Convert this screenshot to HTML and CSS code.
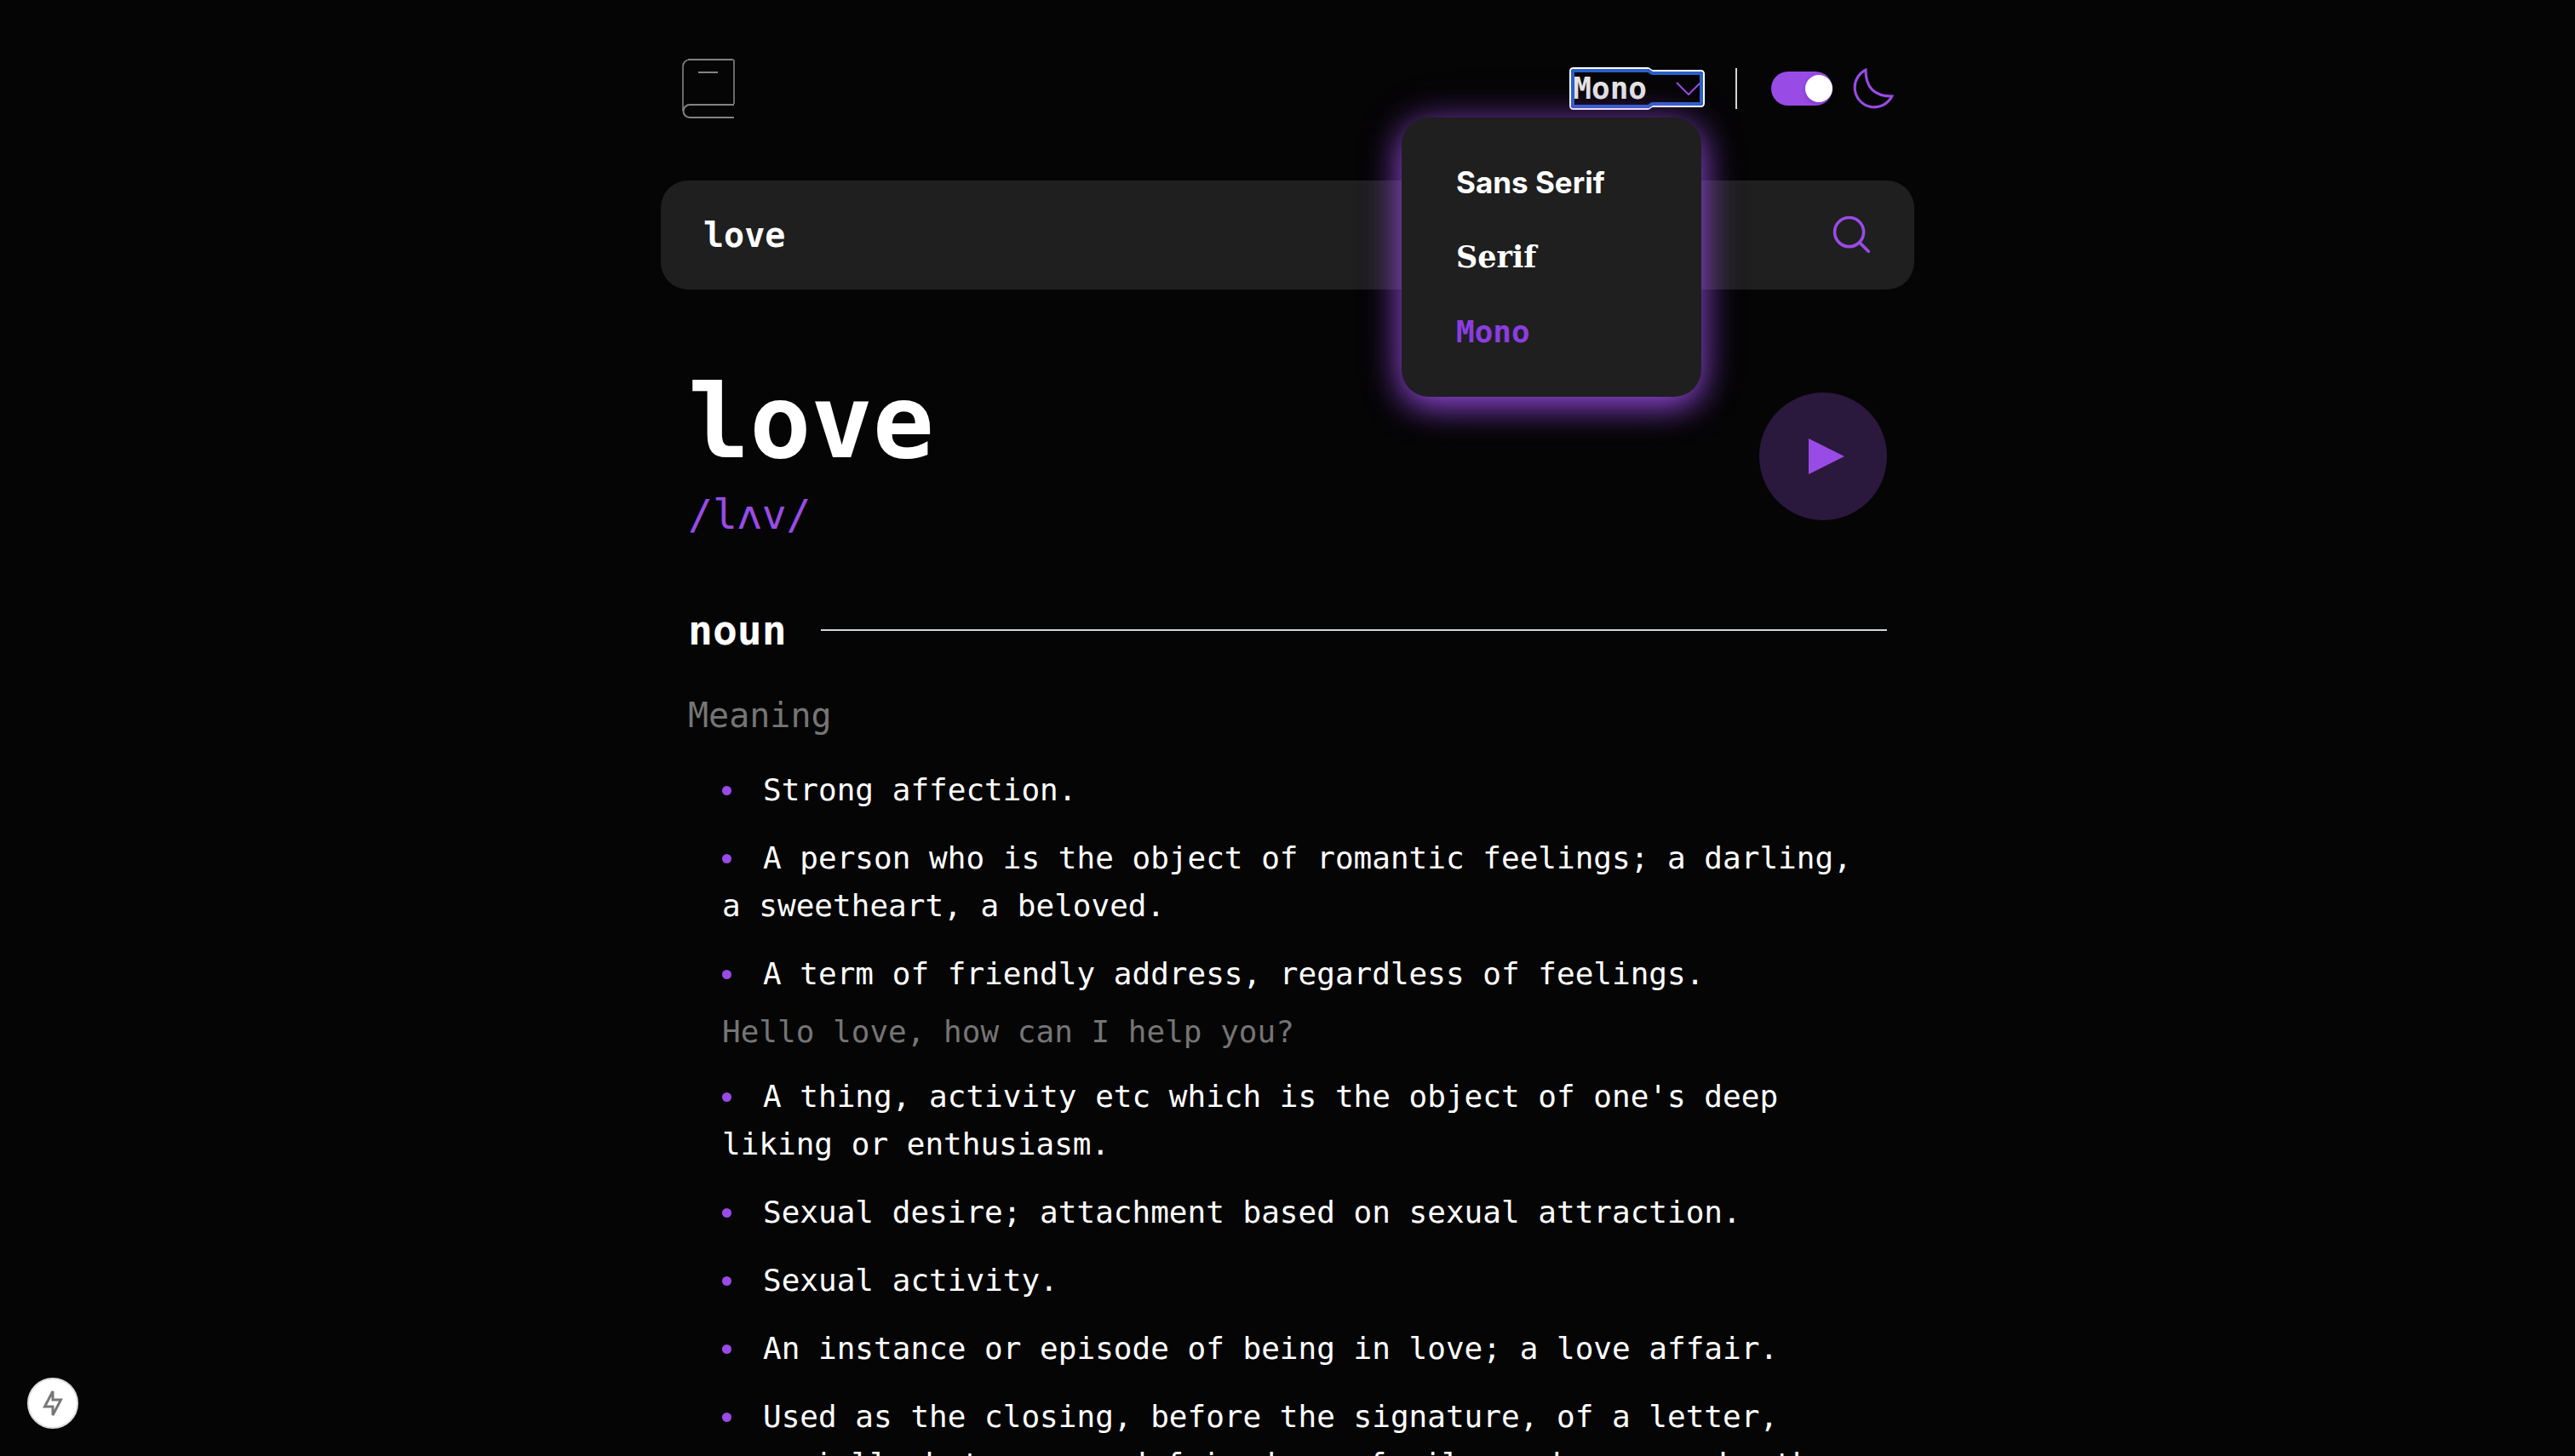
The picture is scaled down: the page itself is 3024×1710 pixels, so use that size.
FILE: index.html
```html
<!DOCTYPE html>
<html lang="en">
<head>
<meta charset="utf-8">
<meta name="viewport" content="width=device-width, initial-scale=1">
<title>love - Dictionary</title>
<link rel="stylesheet" href="styles.css">
</head>
<body>
<div class="page">
  <header class="header">
    <a class="logo" href="#" aria-label="Dictionary home">
      <svg width="64" height="72" viewBox="0 0 64 72" fill="none" stroke="#838383" stroke-width="2">
        <path d="M2 62V10a8 8 0 0 1 8-8h50a2 2 0 0 1 2 2v50" stroke-width="1.6"/>
        <path d="M8 2h52M62 55H10M10 70h52M20 17h23"/>
        <path d="M10 70a7.5 7.5 0 1 1 0-15"/>
      </svg>
    </a>
    <div class="controls">
      <div class="font-picker">
        <button class="font-button" type="button" aria-haspopup="true" aria-expanded="true">
          Mono
          <svg class="chevron" width="30" height="16" viewBox="0 0 30 16" fill="none" stroke="#994be6" stroke-width="2"><path d="m1 1 14 14 14-14"/></svg>
          <svg class="focus-ring" width="160" height="50" viewBox="0 0 160 50" fill="none" aria-hidden="true">
            <path d="M5 1h87c3 0 3 3 6 3h56q4 0 4 4v34q0 4-4 4H98c-3 0-3 3-6 3H5q-4 0-4-4V5q0-4 4-4Z" stroke="#fff" stroke-width="2"/>
            <path d="M6 4h86c3 0 3 3 6 3h55q2 0 2 2v32q0 2-2 2H98c-3 0-3 3-6 3H6q-2 0-2-2V6q0-2 2-2Z" stroke="#2a62cb" stroke-width="4"/>
          </svg>
        </button>
        <ul class="menu">
          <li><button class="menu-item sans" type="button">Sans Serif</button></li>
          <li><button class="menu-item serif" type="button">Serif</button></li>
          <li><button class="menu-item mono" type="button">Mono</button></li>
        </ul>
      </div>
      <span class="divider"></span>
      <label class="theme">
        <input class="toggle" type="checkbox" aria-label="Dark mode" checked>
        <svg width="48" height="48" viewBox="0 0 22 22" fill="none" stroke="#994be6" stroke-width="1.4"><path d="M1 10.449a10.544 10.544 0 0 0 19.993 4.686C11.544 15.135 6.858 10.448 6.858 1A10.545 10.545 0 0 0 1 10.449Z"/></svg>
      </label>
    </div>
  </header>

  <form class="search">
    <input class="search-input" type="text" aria-label="Search for a word" value="love">
    <button class="search-button" type="button" aria-label="Search">
      <svg width="46" height="46" viewBox="0 0 18 18" fill="none" stroke="#994be6" stroke-width="1.4" stroke-linecap="round"><path d="m12.663 12.663 3.887 3.887M1 7.664a6.665 6.665 0 1 0 13.33 0 6.665 6.665 0 0 0-13.33 0Z"/></svg>
    </button>
  </form>

  <main class="entry">
    <section class="word">
      <div class="word-text">
        <h1 class="title">love</h1>
        <p class="phonetic">/lʌv/</p>
      </div>
      <button class="play" type="button" aria-label="Play pronunciation">
        <svg width="42" height="42" viewBox="0 0 42 42" fill="#994be6"><path d="M0 0l42 21L0 42z"/></svg>
      </button>
    </section>

    <section class="part">
      <div class="part-head">
        <h2 class="part-name">noun</h2>
        <span class="rule"></span>
      </div>
      <h3 class="label">Meaning</h3>
      <ul class="meanings">
        <li>Strong affection.</li>
        <li>A person who is the object of romantic feelings; a darling, a sweetheart, a beloved.</li>
        <li>A term of friendly address, regardless of feelings.
          <p class="example">Hello love, how can I help you?</p></li>
        <li>A thing, activity etc which is the object of one's deep liking or enthusiasm.</li>
        <li>Sexual desire; attachment based on sexual attraction.</li>
        <li>Sexual activity.</li>
        <li>An instance or episode of being in love; a love affair.</li>
        <li>Used as the closing, before the signature, of a letter, especially between good friends or family members, or by the young.</li>
      </ul>
    </section>
  </main>
</div>
<button class="dev-badge" type="button" aria-label="Build activity">
  <svg width="26" height="34" viewBox="0 0 26 34" fill="none" stroke="#777" stroke-width="3"><path d="M13 3v10h9.500L13 31V21H3.500z"/></svg>
</button>
</body>
</html>
```
FILE: styles.css
```css
* {
  box-sizing: border-box;
  margin: 0;
  padding: 0;
}

body {
  height: 100vh;
  overflow: hidden;
  background: #050505;
  color: #fff;
  font-family: "DejaVu Sans Mono", monospace;
}

button,
input {
  border: 0;
  background: none;
  color: inherit;
  font: inherit;
  outline: none;
}

button {
  cursor: pointer;
}

svg {
  display: block;
}

ul {
  list-style: none;
}

.page {
  max-width: 1472px;
  margin: 0 auto;
  padding-top: 68px;
}

.header {
  display: flex;
  align-items: center;
  justify-content: space-between;
  padding: 0 24px;
}

.controls {
  display: flex;
  align-items: center;
  gap: 40px;
}

.font-picker {
  position: relative;
}

.font-button {
  position: relative;
  display: flex;
  align-items: center;
  gap: 34px;
  color: #e5e5e5;
  font-size: 36px;
  font-weight: 700;
  line-height: 48px;
}

.focus-ring {
  position: absolute;
  top: -1px;
  left: -4px;
}

.menu {
  position: absolute;
  z-index: 1;
  top: 58px;
  right: 0;
  display: flex;
  flex-direction: column;
  gap: 32px;
  width: 352px;
  padding: 48px 64px;
  border-radius: 32px;
  background: #1f1f1f;
  box-shadow: 0 10px 40px #994be6, 0 0 60px rgba(153, 75, 230, 0.15);
}

.menu li {
  display: flex;
}

.menu-item {
  font-size: 36px;
  font-weight: 700;
  line-height: 56px;
}

.sans {
  font-family: Inter, sans-serif;
  font-size: 35px;
}

.serif {
  font-family: "DejaVu Serif", serif;
  font-size: 35px;
}

.mono {
  color: #8b3de0;
}

.divider {
  width: 2px;
  height: 48px;
  background: #d1d5db;
}

.theme {
  display: flex;
  align-items: center;
  gap: 24px;
}

.toggle {
  appearance: none;
  display: flex;
  justify-content: flex-end;
  width: 72px;
  height: 40px;
  padding: 4px 0;
  border-radius: 20px;
  background: #994be6;
}

.toggle::before {
  content: "";
  width: 32px;
  height: 32px;
  border-radius: 50%;
  background: #fff;
  box-shadow: 0 2px 6px rgba(0, 0, 0, 0.2);
}

.search {
  display: flex;
  align-items: center;
  height: 128px;
  margin-top: 72px;
  padding: 0 50px;
  border-radius: 32px;
  background: #1f1f1f;
}

.search-input {
  flex: 1;
  font-size: 40px;
  font-weight: 700;
  line-height: 56px;
}

.entry {
  margin-top: 96px;
  padding: 0 32px;
}

.word {
  display: flex;
  align-items: center;
  justify-content: space-between;
}

.title {
  font-size: 120px;
  line-height: 120px;
}

.phonetic {
  margin-top: 16px;
  color: #994be6;
  font-size: 48px;
  line-height: 64px;
}

.play {
  display: grid;
  place-items: center;
  width: 150px;
  height: 150px;
  padding-left: 8px;
  border-radius: 50%;
  background: #2b183d;
}

.part {
  margin-top: 72px;
}

.part-head {
  display: flex;
  align-items: center;
  gap: 40px;
}

.part-name {
  font-size: 48px;
  line-height: 64px;
}

.rule {
  flex: 1;
  height: 2px;
  background: #d1d5db;
}

.label {
  margin-top: 40px;
  color: #757575;
  font-size: 40px;
  font-weight: 400;
  line-height: 56px;
}

.meanings {
  display: flex;
  flex-direction: column;
  gap: 24px;
  margin-top: 32px;
  padding: 0 24px 0 40px;
  list-style: disc inside;
  font-size: 36px;
  line-height: 56px;
}

.meanings li::marker {
  color: #994be6;
}

.example {
  margin-top: 16px;
  color: #757575;
  line-height: 48px;
}

.dev-badge {
  position: fixed;
  bottom: 32px;
  left: 32px;
  display: grid;
  place-items: center;
  width: 60px;
  height: 60px;
  border: 2px solid #ddd;
  border-radius: 50%;
  background: #fff;
}
```
